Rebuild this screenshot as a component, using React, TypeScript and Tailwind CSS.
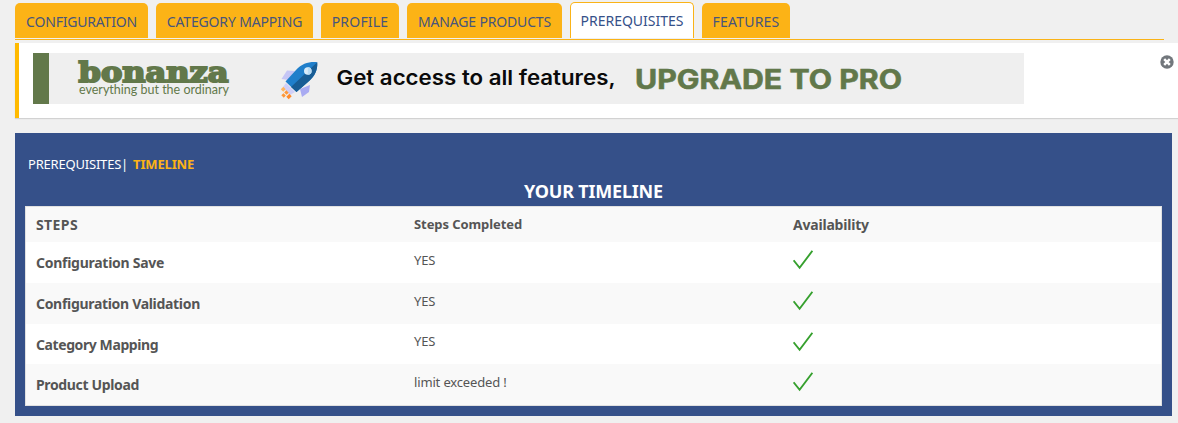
import clsx from "clsx";

const tabs = [
  { label: "CONFIGURATION", width: "w-[133px]", tracking: "tracking-[-0.2px]" },
  { label: "CATEGORY MAPPING", width: "w-[157px]", tracking: "tracking-[-0.16px]" },
  { label: "PROFILE", width: "w-[78px]", tracking: "tracking-[0.2px]" },
  { label: "MANAGE PRODUCTS", width: "w-[155px]", tracking: "tracking-[-0.16px]" },
  { label: "PREREQUISITES", width: "w-[124px]", tracking: "tracking-[0px]", active: true },
  { label: "FEATURES", width: "w-[88px]", tracking: "tracking-[0.2px]" },
];

const steps = [
  { name: "Configuration Save", status: "YES", height: "h-[41px]", shade: "bg-white", tracking: "tracking-[-0.27px]", offset: "pt-[8px]" },
  { name: "Configuration Validation", status: "YES", height: "h-[41px]", shade: "bg-[#f9f9f9]", tracking: "tracking-[-0.31px]", offset: "pt-[8px]" },
  { name: "Category Mapping", status: "YES", height: "h-[40px]", shade: "bg-white", tracking: "tracking-[-0.41px]", offset: "pt-[7px]" },
  { name: "Product Upload", status: "limit exceeded !", height: "h-[41px]", shade: "bg-[#f9f9f9]", tracking: "tracking-[-0.35px]", offset: "pt-[8px]" },
];

function Check() {
  return (
    <svg width="20" height="20" viewBox="0 0 20 20" className="block">
      <path d="M0.6 10.3 L6.6 17.800 L19.4 0.800" fill="none" stroke="#36a02e" strokeWidth="1.9" />
    </svg>
  );
}

function CloseIcon() {
  return (
    <svg width="14" height="14" viewBox="0 0 14 14" className="block">
      <circle cx="7" cy="7" r="6.7" fill="#72777c" />
      <path d="M4.2 4.2 L9.8 9.8 M9.8 4.2 L4.2 9.8" stroke="#fff" strokeWidth="2.500" />
    </svg>
  );
}

function Banner() {
  return (
    <svg width="991" height="51" viewBox="0 0 991 51" className="block bg-[#efefef]">
      <rect width="16" height="51" fill="#62784a" />
      <g fill="#62784a">
        <text x="45.500" y="29" fontFamily="DejaVu Serif, serif" fontWeight="700" fontSize="28" stroke="#62784a" strokeWidth="2" textLength="150" lengthAdjust="spacingAndGlyphs">bonanza</text>
        <text x="46" y="41.3" fontFamily="Lato, sans-serif" fontSize="12.500" textLength="150" lengthAdjust="spacingAndGlyphs">everything but the ordinary</text>
        <text x="602" y="35.700" fontFamily="Inter, sans-serif" fontWeight="700" fontSize="26.500" stroke="#62784a" strokeWidth="0.600" textLength="267" lengthAdjust="spacingAndGlyphs">UPGRADE TO PRO</text>
      </g>
      <text x="303.500" y="32" fontFamily="Inter, sans-serif" fontWeight="600" fontSize="20.500" fill="#0a0a0a" textLength="279" lengthAdjust="spacingAndGlyphs">Get access to all features,</text>
      <g>
        <path d="M262 18 L254 17.500 L248.500 26 L255 27 Z" fill="#c5c6f5" />
        <path d="M277 32 L276 39 L269 44 L267 36 Z" fill="#a9abf2" />
        <path d="M253 30 L262 39 L257 42 L250 34 Z" fill="#cfcff8" />
        <path d="M284.200 9.200 C276 8.500 269 10.500 263 17 L252.500 28.500 L263.500 39 L275 29 C282 23 284.800 17 284.200 9.200 Z" fill="#1f7fcb" />
        <path d="M284.200 9.200 C284.800 17 282 23 275 29 L263.500 39 L258 34 Z" fill="#185d95" />
        <circle cx="274.800" cy="18" r="3.800" fill="#d9ecfa" />
        <path d="M274.800 14.200 A3.800 3.800 0 0 1 274.800 21.800 Z" fill="#b9dcf5" />
        <g stroke="#ff9838" strokeWidth="3.400">
          <path d="M251.500 35 L249 37.500" stroke="#ffb55f" />
          <path d="M254.500 38.500 L249.500 43.500" strokeDasharray="3 1" />
          <path d="M257.500 42 L254.500 45" stroke="#ff8b2c" />
        </g>
      </g>
    </svg>
  );
}

export default function App() {
  return (
    <div className="h-[423px] overflow-hidden bg-[#f0f0f0] pl-[15px] pt-[2px] font-['Noto_Sans',sans-serif] text-[#555]">
      <nav className="mr-[14px] flex h-[38px] items-start gap-2 border-b border-[#fab317]">
        {tabs.map((t) => (
          <div
            key={t.label}
            className={clsx(
              "flex shrink-0 justify-center whitespace-nowrap text-sm leading-5",
              t.width,
              t.tracking,
              t.active
                ? "h-9 rounded-t-[5px] border border-b-0 border-[#fab317] bg-white pt-[8px] text-[#355089]"
                : "mt-px h-[35px] rounded-t-[5px] bg-[#fcb316] pt-[9px] text-[#47557c]",
            )}
          >
            {t.label}
          </div>
        ))}
      </nav>

      <section className="mt-[3px] flex h-[75px] justify-between border-l-4 border-[#ffba00] bg-white pl-[14px] pr-1 pt-[10px] shadow-[0_1px_1px_rgba(0,0,0,0.12)]">
        <Banner />
        <button aria-label="Dismiss" className="mt-[2px] h-[14px] w-[14px]">
          <CloseIcon />
        </button>
      </section>

      <main className="mr-[6px] mt-[15px] h-[283px] bg-[#355089] px-[10px] pt-[21px]">
        <div className="flex h-[21px] items-baseline pl-[3px] text-[13px] leading-5">
          <span className="tracking-[-0.2px] text-white">PREREQUISITES</span>
          <span className="w-[12px] text-white">|</span>
          <span className="font-bold tracking-[-0.15px] text-[#fcb316]">TIMELINE</span>
        </div>
        <h1 className="mt-1 h-[27px] text-center text-[18px] font-bold leading-6 tracking-[-0.2px] text-white">YOUR TIMELINE</h1>

        <div className="w-[1137px] border border-[#e1e1e1] text-sm leading-5">
          <div className="grid h-[35px] grid-cols-[378px_379px_1fr] bg-[#f9f9f9] pl-[10px] pt-[8px] font-bold">
            <span className="tracking-[0.4px]">STEPS</span>
            <span className="-mt-px text-[13px] tracking-[-0.08px]">Steps Completed</span>
            <span className="tracking-[-0.2px]">Availability</span>
          </div>
          {steps.map((s) => (
            <div key={s.name} className={clsx("grid grid-cols-[378px_379px_1fr] pl-[10px]", s.height, s.shade)}>
              <span className={clsx("pt-[11px] font-bold", s.tracking)}>{s.name}</span>
              <span className={clsx("text-[13px] tracking-[-0.15px]", s.offset)}>{s.status}</span>
              <span className="pt-[8px]">
                <Check />
              </span>
            </div>
          ))}
        </div>
      </main>
    </div>
  );
}
